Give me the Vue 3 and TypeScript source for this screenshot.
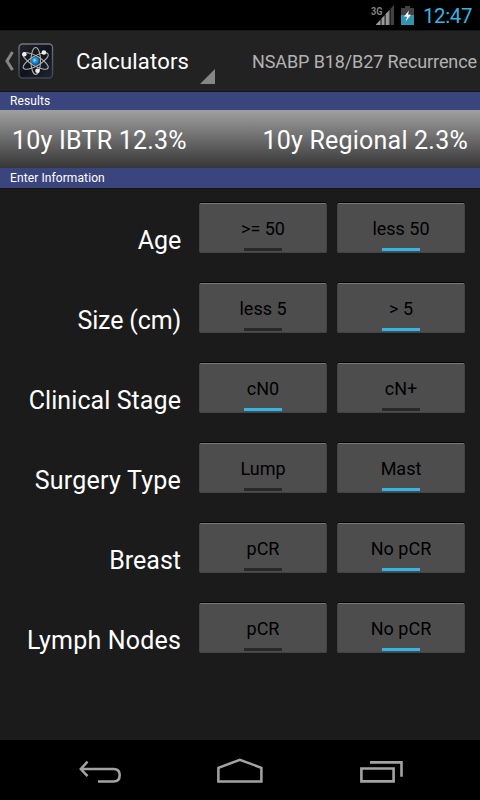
<script setup lang="ts">
import { reactive } from 'vue'

interface Question {
  label: string
  cls: string
  options: [string, string]
  selected: number
}

const questions = reactive<Question[]>([
  { label: 'Age', cls: 'age', options: ['>= 50', 'less 50'], selected: 1 },
  { label: 'Size (cm)', cls: 'size', options: ['less 5', '> 5'], selected: 1 },
  { label: 'Clinical Stage', cls: 'stage', options: ['cN0', 'cN+'], selected: 0 },
  { label: 'Surgery Type', cls: 'surgery', options: ['Lump', 'Mast'], selected: 1 },
  { label: 'Breast', cls: 'breast', options: ['pCR', 'No pCR'], selected: 1 },
  { label: 'Lymph Nodes', cls: 'nodes', options: ['pCR', 'No pCR'], selected: 1 },
])
</script>

<template>
  <div class="screen">
    <div class="status">
      <svg class="signal" width="24" height="24" viewBox="0 0 24 24">
        <path d="M23 0V20H19.5V3.8Z" fill="#414141" />
        <path d="M18.7 4.6V20H14.5V9.2Z" fill="#777" />
        <path d="M17.6 6V20H15V8.9ZM13.6 10.2V20H10.5V13.5ZM9.6 14.5V20H5V19.4Z" fill="#999" />
        <text x="0" y="9.5" class="net" textLength="11.5" lengthAdjust="spacingAndGlyphs">3G</text>
      </svg>
      <svg class="battery" width="13" height="19" viewBox="0 0 13 19">
        <path d="M4 0H9V2H13V9H0V2H4Z" fill="#424242" />
        <path d="M0 9H13V19H0Z" fill="#3292b4" />
        <path d="M8 4.5L3 10.5L6.2 10.8L4.6 15.5L10 8.8L7 8.6Z" fill="#fff" />
      </svg>
      <span class="clock">12:47</span>
    </div>

    <header class="actionbar">
      <svg class="up" width="11" height="20" viewBox="0 0 11 20">
        <path d="M8.5 1L3 10L8.5 19" fill="none" stroke="#858585" stroke-width="3" />
      </svg>
      <svg class="logo" width="36" height="36" viewBox="0 0 36 36">
        <defs>
          <linearGradient id="frame" x1="0" y1="0" x2="0" y2="1">
            <stop offset="0" stop-color="#747474" /><stop offset="1" stop-color="#3f434b" />
          </linearGradient>
          <linearGradient id="tile" x1="0" y1="0" x2="1" y2="1">
            <stop offset="0" stop-color="#22252c" /><stop offset=".5" stop-color="#10131d" /><stop offset="1" stop-color="#1d2434" />
          </linearGradient>
          <radialGradient id="core" cx=".4" cy=".4">
            <stop offset="0" stop-color="#b6efff" /><stop offset=".45" stop-color="#239be6" /><stop offset="1" stop-color="#0866ac" />
          </radialGradient>
        </defs>
        <rect x="1" y="1" width="33.5" height="34" rx="3.5" fill="url(#tile)" stroke="url(#frame)" stroke-width="1.4" />
        <g fill="none" stroke="#b5b0aa" stroke-width="1.1">
          <ellipse cx="17.7" cy="18" rx="4.8" ry="13.5" />
          <ellipse cx="17.7" cy="18" rx="4.8" ry="14.2" transform="rotate(60 17.7 18)" />
          <ellipse cx="17.7" cy="18" rx="4.8" ry="14.2" transform="rotate(120 17.7 18)" />
        </g>
        <circle cx="17.5" cy="18" r="4.2" fill="url(#core)" />
        <g fill="#f0f0f0">
          <circle cx="6.3" cy="11.3" r="2.3" /><circle cx="25.9" cy="9.5" r="2.3" /><circle cx="19.5" cy="27.8" r="2.3" />
        </g>
      </svg>
      <div class="spinner">
        <span class="title">Calculators</span>
        <svg class="corner" width="15" height="15" viewBox="0 0 15 15"><path d="M15 0V15H0Z" fill="#868686" /></svg>
      </div>
      <span class="action">NSABP B18/B27 Recurrence</span>
    </header>

    <div class="section first"><span>Results</span></div>
    <div class="results">
      <span class="ibtr">10y IBTR 12.3%</span>
      <span class="regional">10y Regional 2.3%</span>
    </div>
    <div class="section second"><span class="enter">Enter Information</span></div>

    <main class="form">
      <div v-for="q in questions" :key="q.label" class="row">
        <div class="label"><span :class="q.cls">{{ q.label }}</span></div>
        <div class="options">
          <button
            v-for="(option, i) in q.options"
            :key="i"
            class="toggle"
            :class="{ on: q.selected === i }"
            @click="q.selected = i"
          >{{ option }}</button>
        </div>
      </div>
    </main>

    <nav class="navbar">
      <svg width="44" height="28" viewBox="0 0 44 28">
        <path d="M2.5 12H35.5Q41.7 12 41.7 18.2T35.5 24.5H20M9.5 4.7L2.8 12L9.5 19.2" fill="none" stroke="#a3a3a3" stroke-width="2.5" />
      </svg>
      <svg width="48" height="28" viewBox="0 0 48 28">
        <path d="M1.4 10.8V24.4H44.4V10.8L22.9 2.8Z" fill="none" stroke="#a3a3a3" stroke-width="2.5" />
      </svg>
      <svg width="44" height="28" viewBox="0 0 44 28">
        <path d="M1.4 11.5H33.6V24.4H1.4ZM10 5.4H41.5V19.7" fill="none" stroke="#a3a3a3" stroke-width="2.6" />
      </svg>
    </nav>
  </div>
</template>

<style>
body {
  background: #000;
}
</style>

<style scoped>
.screen {
  width: 480px;
  height: 800px;
  display: flex;
  flex-direction: column;
  overflow: hidden;
  background: #1b1b1b;
  color: #fff;
  font-family: Roboto, "Liberation Sans", sans-serif;
  white-space: nowrap;
}
.status {
  height: 30px;
  flex: none;
  box-sizing: border-box;
  display: flex;
  padding: 5px 0 0 371px;
  background: #000;
}
.net {
  font: bold 10.5px Roboto, sans-serif;
  fill: #808080;
}
.battery {
  margin: 1px 0 0 6px;
}
.clock {
  margin-left: 9px;
  line-height: 23px;
  font-size: 20.5px;
  letter-spacing: -0.4px;
  color: #33b5e5;
}
.actionbar {
  height: 62px;
  flex: none;
  box-sizing: border-box;
  display: flex;
  align-items: flex-start;
  background: #222;
  border-top: 1px solid #161616;
  border-bottom: 1px solid #15151a;
}
.up {
  margin: 20px 0 0 4px;
}
.logo {
  margin: 12px 0 0 3px;
}
.spinner {
  width: 161px;
  height: 53px;
  display: flex;
  align-items: flex-end;
  justify-content: space-between;
}
.title {
  margin-left: 22px;
  line-height: 44px;
  font-size: 22px;
  letter-spacing: 0.2px;
}
.action {
  margin-left: 37px;
  line-height: 62px;
  font-size: 18px;
  letter-spacing: -0.11px;
  color: #b2b2b2;
}
.section {
  flex: none;
  padding-left: 10px;
  background: #3b457d;
  font-size: 12px;
  letter-spacing: 0.1px;
}
.first {
  height: 18px;
  line-height: 18px;
}
.second {
  height: 20px;
  line-height: 20px;
}
.results {
  height: 58px;
  flex: none;
  box-sizing: border-box;
  display: flex;
  justify-content: space-between;
  padding: 0 12px;
  line-height: 61px;
  font-size: 25px;
  letter-spacing: 0.22px;
  background: linear-gradient(#a0a0a0, #363636);
}
.form {
  flex: 1;
  box-shadow: inset 0 1px #151515;
}
.row {
  height: 80px;
  display: flex;
  gap: 18px;
  box-sizing: border-box;
  padding-top: 15px;
}
.label {
  width: 181px;
  text-align: right;
  line-height: 75px;
  font-size: 25px;
}
.age,
.size {
  letter-spacing: -0.15px;
}
.stage {
  letter-spacing: 0.08px;
}
.surgery {
  letter-spacing: 0.23px;
}
.nodes {
  letter-spacing: 0.18px;
}
.options {
  display: flex;
  gap: 10px;
}
.toggle {
  width: 128px;
  height: 50px;
  box-sizing: border-box;
  display: flex;
  flex-direction: column;
  align-items: center;
  padding: 0;
  border: 1px solid #444;
  border-top-color: #777;
  border-radius: 2px;
  box-shadow: 0 -1px #050505;
  background: #4d4d4d;
  color: #000;
  font: 18px/50px Roboto, sans-serif;
}
.toggle::after {
  content: "";
  width: 38px;
  height: 3px;
  flex: none;
  margin-top: -6px;
  background: #292929;
}
.toggle.on::after {
  background: #33b5e5;
}
.navbar {
  height: 60px;
  flex: none;
  box-sizing: border-box;
  display: flex;
  justify-content: space-between;
  padding: 17px 76px 0 78px;
  background: #000;
}
</style>
